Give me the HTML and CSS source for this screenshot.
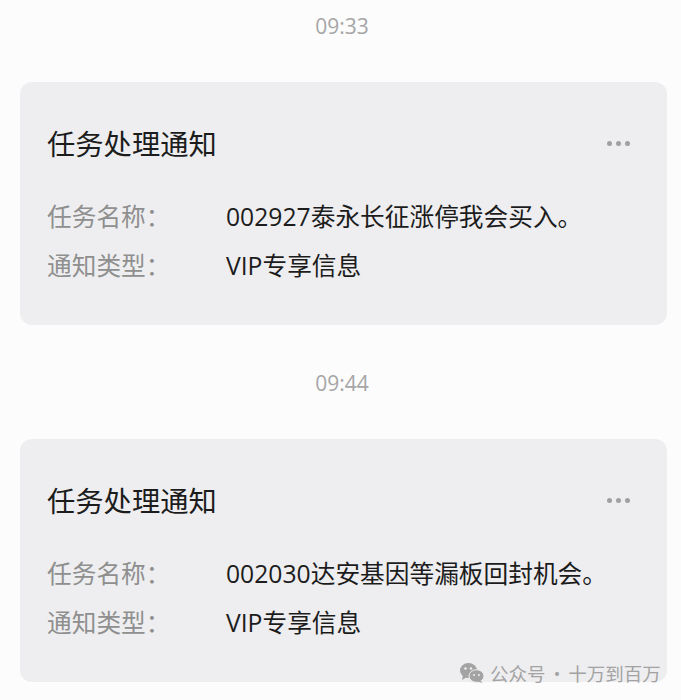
FILE: index.html
```html
<!DOCTYPE html>
<html lang="zh-CN">
<head>
    <meta charset="UTF-8">
    <meta name="viewport" content="width=device-width, initial-scale=1.0">
    <title>任务处理通知</title>
    <link rel="stylesheet" href="styles.css">
</head>
<body>
    <div class="chat">
        <div class="time">09:33</div>
        <div class="card">
            <div class="card-head">
                <h2>任务处理通知</h2>
                <div class="dots"><span></span><span></span><span></span></div>
            </div>
            <div class="row"><div class="label">任务名称：</div><div class="value">002927泰永长征涨停我会买入。</div></div>
            <div class="row"><div class="label">通知类型：</div><div class="value">VIP专享信息</div></div>
        </div>
        <div class="time">09:44</div>
        <div class="card">
            <div class="card-head">
                <h2>任务处理通知</h2>
                <div class="dots"><span></span><span></span><span></span></div>
            </div>
            <div class="row"><div class="label">任务名称：</div><div class="value">002030达安基因等漏板回封机会。</div></div>
            <div class="row"><div class="label">通知类型：</div><div class="value">VIP专享信息</div></div>
        </div>
    </div>
    <div class="watermark">
        <svg width="26" height="22" viewBox="0 0 26 22">
            <ellipse cx="9.5" cy="8.5" rx="8.5" ry="7.5" fill="#a3a3a3"/>
            <path d="M4 13l-1 5 5-3z" fill="#a3a3a3"/>
            <ellipse cx="17.5" cy="14" rx="7.5" ry="6.3" fill="#a3a3a3" stroke="#eeeef0" stroke-width="1"/>
            <path d="M21 18l2.5 3-5-1.500z" fill="#a3a3a3"/>
            <circle cx="6.500" cy="6.500" r="1.300" fill="#eeeef0"/>
            <circle cx="12" cy="6.500" r="1.300" fill="#eeeef0"/>
            <circle cx="15" cy="13" r="1" fill="#eeeef0"/>
            <circle cx="20" cy="13" r="1" fill="#eeeef0"/>
        </svg>
        <span>公众号 · 十万到百万</span>
    </div>
</body>
</html>
```

FILE: styles.css
```css
body {
    margin: 0;
    height: 700px;
    overflow: hidden;
    background: #fcfcfd;
    font-family: "Noto Sans CJK SC", "Noto Sans", sans-serif;
}
.chat {
    display: flex;
    flex-direction: column;
    padding: 0 14px 0 20px;
}
.time {
    height: 82px;
    padding: 12px 3px 0 0;
    box-sizing: border-box;
    text-align: center;
    font-family: "Open Sans", sans-serif;
    font-size: 21px;
    line-height: 28px;
    color: #a6a6a6;
}
.card {
    height: 243px;
    margin-bottom: 32px;
    padding: 0 28px 0 27px;
    box-sizing: border-box;
    background: #eeeef0;
    border-radius: 12px;
}
.card-head {
    display: flex;
    justify-content: space-between;
    align-items: center;
    height: 107px;
    padding-top: 14px;
    box-sizing: border-box;
    margin-bottom: 1px;
}
h2 {
    margin: 0;
    font-size: 28.3px;
    font-weight: 400;
    line-height: 40px;
    color: #1c1c1c;
}
.dots {
    display: flex;
    gap: 4px;
    margin-right: 9px;
    margin-top: 2px;
}
.dots span {
    width: 5px;
    height: 5px;
    border-radius: 50%;
    background: #a0a0a4;
}
.row {
    display: flex;
    height: 49px;
    align-items: center;
    font-size: 24.7px;
}
.label {
    width: 179px;
    color: #8f8f8f;
}
.value {
    color: #1c1c1c;
    font-family: "Open Sans", "Noto Sans CJK SC", sans-serif;
}
.watermark {
    position: absolute;
    left: 459px;
    top: 660px;
    display: flex;
    align-items: center;
    gap: 5px;
    font-size: 18.5px;
    word-spacing: -2px;
    color: #a3a3a3;
}
```
